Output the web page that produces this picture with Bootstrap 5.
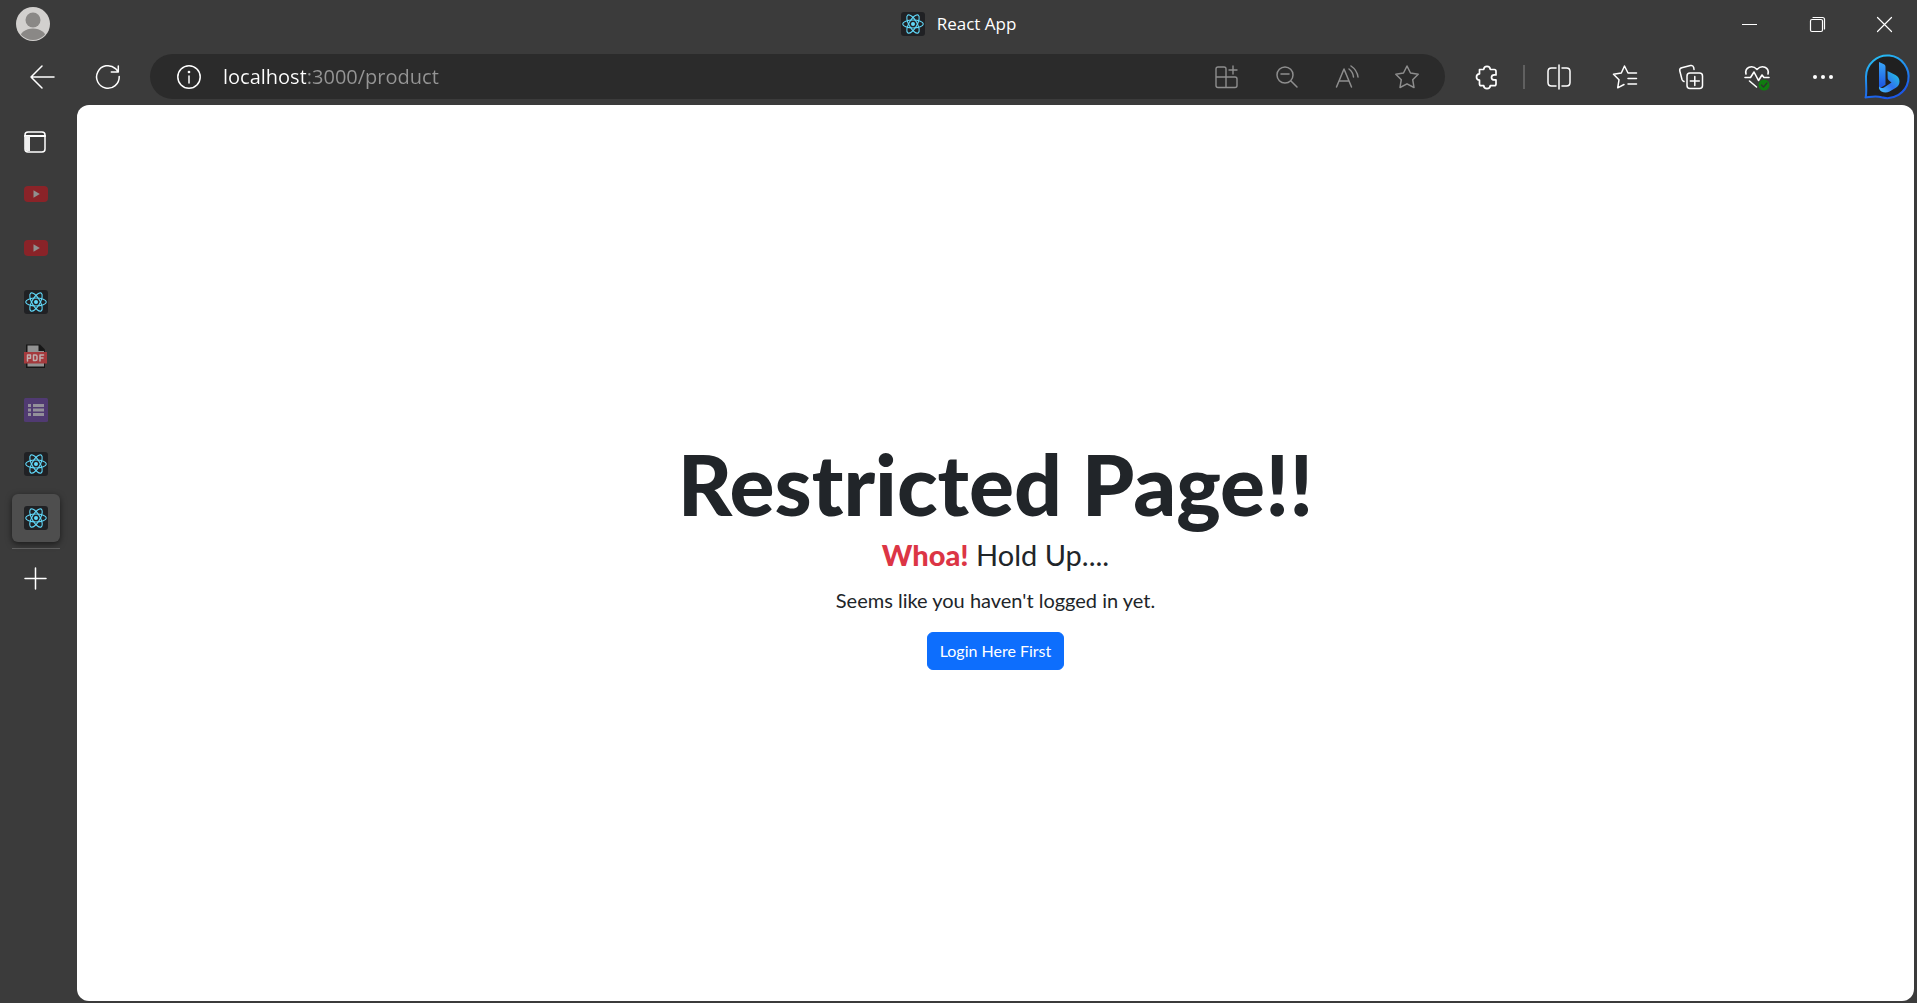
<!DOCTYPE html>
<html lang="en">
<head>
<meta charset="utf-8">
<meta name="viewport" content="width=device-width, initial-scale=1">
<title>React App</title>
<link href="https://cdn.jsdelivr.net/npm/bootstrap@5.3.0/dist/css/bootstrap.min.css" rel="stylesheet">
<style>
body{background:#3b3b3b;color:#fff;font-family:"Open Sans","Noto Sans",sans-serif}
button.tool{width:66px;height:46px;flex:none;border:0;padding:0;background:none;color:#fff;display:flex;align-items:center;justify-content:center}
svg{display:block;fill:none;stroke:currentColor;stroke-width:1.5;stroke-linecap:round;stroke-linejoin:round;overflow:visible}
.titlebar{height:48px}
.titlebar .side{flex:1 0 0}
.titlebar button.tool{width:68px}
.titlebar button.avatar,.titlebar button.close-window{width:66px}
.tabname{font-size:17px;line-height:26px}
.tabtitle{gap:12px}
.toolbar{height:57px;padding:0 0 0 9px}
.toolbar .address{height:45px;background:#2b2b2b;border-radius:23px;margin:0 9px;padding:0 8px 0 6px}
.address button.tool{width:60px;color:#8e8e8e}
.address button.site-info{width:66px;color:#fff}
.address input{border:0;outline:0;padding:0 0 0 1px;font-size:20px;line-height:28px;height:44px;background:linear-gradient(to right,#fff 84px,#959595 84px);-webkit-background-clip:text;background-clip:text;-webkit-text-fill-color:transparent}
.rule-v{width:2px;height:24px;background:#606060;margin:0 1px 0 3px}
.toolbar button.assistant{width:61px}
.sidetabs{width:77px;padding:13px 0 0 12px}
.sidetabs button.tool{width:48px;height:48px;border-radius:6px}
.sidetabs button.edge-tool{width:46px}
.sidetabs button.picked{background:#4e4e4e;box-shadow:0 2px 6px rgba(0,0,0,.55)}
.sidetabs .tablist{gap:6px;margin-top:4px}
.rule-h{width:48px;height:1px;background:#626262;margin:6px 0 5px}
.dimmed{opacity:.5}
.viewport{background:#fff;color:#212529;border-radius:12px;margin:0 3px 2px 0;font-family:Lato,sans-serif}
.viewport h1{font-size:84px;line-height:96px;font-weight:900;margin-bottom:2px}
.whoa{font-size:29px;line-height:42px}
.whoa strong{font-weight:900}
.hint{font-size:20px;line-height:32px}
.viewport .btn{font-size:16px;line-height:24px}
</style>
<script src="https://cdn.jsdelivr.net/npm/bootstrap@5.3.0/dist/js/bootstrap.bundle.min.js"></script>
</head>
<body>
<svg width="0" height="0" class="position-absolute" aria-hidden="true">
<defs>
<symbol id="react" viewBox="0 0 24 24"><rect width="24" height="24" rx="3" fill="#202124" stroke="none"/><g fill="none" stroke="#61dafb" stroke-width="1.1"><ellipse cx="12" cy="12" rx="10.3" ry="4"/><ellipse cx="12" cy="12" rx="10.3" ry="4" transform="rotate(60 12 12)"/><ellipse cx="12" cy="12" rx="10.3" ry="4" transform="rotate(120 12 12)"/></g><circle cx="12" cy="12" r="2" fill="#61dafb" stroke="none"/></symbol>
<symbol id="video" viewBox="0 0 24 24"><rect y="4" width="24" height="16" rx="4" fill="#d90c17" stroke="none"/><path d="M9.500 8.200v7.600l6.300-3.800z" fill="#e5e5e5" stroke="none"/></symbol>
</defs>
</svg>
<div class="vh-100 d-flex flex-column overflow-hidden">
  <header class="titlebar d-flex align-items-center justify-content-between">
    <div class="side d-flex"><button class="tool avatar" aria-label="Profile"><svg width="34" height="34" viewBox="0 0 34 34" stroke="none"><clipPath id="face"><circle cx="17" cy="17" r="16"/></clipPath><circle cx="17" cy="17" r="17" fill="#d2d0ce" stroke="none"/><g clip-path="url(#face)" fill="#8a8886" stroke="none"><circle cx="17" cy="13" r="7.500"/><ellipse cx="17" cy="32" rx="13.500" ry="10.500"/></g></svg></button></div>
    <div class="tabtitle d-flex align-items-center"><svg width="24" height="24"><use href="#react"/></svg><span class="tabname">React App</span></div>
    <div class="side d-flex justify-content-end">
      <button class="tool" aria-label="Minimize"><svg width="15" height="15"><path d="M0 7.500h15" stroke-linecap="butt" stroke-width="1"/></svg></button>
      <button class="tool" aria-label="Restore"><svg width="15" height="15"><rect x=".5" y="2.500" width="12" height="12" rx="1.500" stroke-width="1.200"/><path d="M3 .5h9.500q2 0 2 2V12" stroke-width="1.200"/></svg></button>
      <button class="tool close-window" aria-label="Close"><svg width="15" height="15"><path d="M.5.5l14 14M14.500.5l-14 14" stroke-width="1.200"/></svg></button>
    </div>
  </header>
  <nav class="toolbar d-flex align-items-center">
    <button class="tool" aria-label="Back"><svg width="24" height="24"><path d="M24 12H1M12 1L1 12l11 11"/></svg></button>
    <button class="tool" aria-label="Refresh"><svg width="24" height="24"><path d="M23.200 11.500A11.300 11.300 0 1 1 19.500 3.600L22 6.500M22.300 1v6h-7"/></svg></button>
    <div class="address d-flex align-items-center flex-grow-1">
      <button class="tool site-info" aria-label="Site information"><svg width="24" height="24"><circle cx="12" cy="12" r="11.200"/><path d="M12 11v7"/><circle cx="12" cy="7" r=".6"/></svg></button>
      <input class="flex-grow-1" type="text" aria-label="Address" value="localhost:3000/product">
      <button class="tool" aria-label="Apps"><svg width="24" height="24"><path d="M11 12V4q0-2-2-2H3Q1 2 1 4v16.500q0 2 2 2h17q2 0 2-2V14q0-2-2-2H1M11 12v10.500M18 1v8M14 5h8" stroke-width="1.400"/></svg></button>
      <button class="tool" aria-label="Zoom out"><svg width="24" height="24"><circle cx="10" cy="10" r="8"/><path d="M16 16l6 6M6 9h8"/></svg></button>
      <button class="tool" aria-label="Read aloud"><svg width="24" height="24"><path d="M1.500 22L9 4l7.500 18M4 16h10M14 4q4 3 4.500 8M16 1q6 4 7 11"/></svg></button>
      <button class="tool" aria-label="Add to favorites"><svg width="24" height="24"><path d="M12 1l3.500 7 7.700 1.200-5.500 5.500 1.300 7.800-7-3.700-7 3.700 1.300-7.800L.8 9.200 8.500 8z"/></svg></button>
    </div>
    <button class="tool" aria-label="Extensions"><svg width="24" height="24"><path d="M4.500 4.500h4.200C9 .2 15 .2 15.300 4.500h4q1.700 0 1.700 1.700v3.700h-1.500c-4 0-4 5 0 5H21v4q0 1.700-1.700 1.700h-4c-.3 4-6.300 4-6.600 0H6.200q-1.700 0-1.700-1.700v-3.700c-4-.3-4-6 0-6.300z" stroke-width="1.700"/></svg></button>
    <div class="rule-v"></div>
    <button class="tool" aria-label="Split screen"><svg width="24" height="24"><path d="M9 3H4.500Q1 3 1 6.500v11Q1 21 4.500 21H9M15 3h4.500Q23 3 23 6.500v11q0 3.500-3.500 3.500H15M12 0v24"/></svg></button>
    <button class="tool" aria-label="Favorites"><svg width="24" height="24"><path d="M15 8L11.500 1 8.300 8 .5 9.300l5.500 5.500-1.300 8L11 19.500M15 8h8.500M15 13.500h8.500M15 19h8.500"/></svg></button>
    <button class="tool" aria-label="Collections"><svg width="24" height="24"><rect x="8" y="8" width="15.500" height="15.500" rx="3"/><path d="M15.800 11.500v9M11.300 16h9M5 16.500q-1.500-.5-2-2L.8 6Q.2 3.500 2.800 2.800L11.500.6q2.500-.6 3.200 1.900l.3 2"/></svg></button>
    <button class="tool" aria-label="Browser essentials"><svg width="24" height="24"><path d="M1 9C-.5 2.500 7-.8 12 4.500 17-.8 24.500 2.500 23 9M0 12.500h5.500L9 7l4.500 8.500L17 10l2 2.500h5M4.500 16l7 6" stroke-width="1.600"/><circle cx="19" cy="20" r="5.500" fill="#107c10" stroke="none"/><path d="M16.500 20l2 2 3.500-4" stroke="#303030" stroke-width="1.200"/></svg></button>
    <button class="tool" aria-label="Settings and more"><svg width="20" height="4"><g fill="#fff" stroke="none"><circle cx="2" cy="2" r="2"/><circle cx="10" cy="2" r="2"/><circle cx="18" cy="2" r="2"/></g></svg></button>
    <button class="tool assistant" aria-label="Bing Chat"><svg width="46" height="46" viewBox="0 0 46 46"><defs><linearGradient id="ring" x1="0" y1="0" x2=".4" y2="1"><stop stop-color="#28c8f5"/><stop offset="1" stop-color="#1b58e8"/></linearGradient><linearGradient id="stem" x1="0" y1="0" x2="0" y2="1"><stop stop-color="#38a6f8"/><stop offset="1" stop-color="#1a50e0"/></linearGradient><linearGradient id="bowl" x1="1" y1="0" x2="0" y2="1"><stop stop-color="#20cfe0"/><stop offset=".55" stop-color="#2f72ee"/><stop offset="1" stop-color="#48c8ff"/></linearGradient></defs><path d="M1.500 43.500c1.500-4 .5-9 .5-21a21.300 21.300 0 1 1 15.500 20.800c-6-2-11-.3-16 .2z" fill="#202020" stroke="url(#ring)" stroke-width="2"/><path d="M15 8l5 2.300q1.500.8 1.500 2.500v18l-6.500 4z" fill="url(#stem)" stroke="none"/><path d="M23.500 17l8 4q4 2 4 6.500 0 4-4 6.500l-6 3.500q-4 2-8 0-3-2-2.500-5 2 2.500 5 1l7.500-5-2.500-2q-1-1-1.300-2z" fill="url(#bowl)" stroke="none"/></svg></button>
  </nav>
  <div class="d-flex flex-grow-1">
    <aside class="sidetabs flex-shrink-0">
      <button class="tool edge-tool" aria-label="Tab actions"><svg width="22" height="22"><rect x="1" y="1" width="20" height="20" rx="3"/><path d="M1 5h20" stroke-width="2"/><path d="M1 5h5v15H3q-2 0-2-2z" fill="#eee" stroke="none"/></svg></button>
      <div class="tablist d-flex flex-column">
        <button class="tool" aria-label="Video tab 1"><svg class="dimmed" width="24" height="24"><use href="#video"/></svg></button>
        <button class="tool" aria-label="Video tab 2"><svg class="dimmed" width="24" height="24"><use href="#video"/></svg></button>
        <button class="tool" aria-label="React App tab 1"><svg width="24" height="24"><use href="#react"/></svg></button>
        <button class="tool" aria-label="PDF tab"><svg width="24" height="24"><path d="M2 .5h14l5 5V24H2z" fill="#171717" stroke="none"/><path d="M3.500 1.500h11v5.500H20v15.500H3.500z" fill="#929292" stroke="none"/><path d="M0 8h23v11.500H0z" fill="#a43a3d" stroke="none"/><path d="M3.500 17v-6h3v3.300h-3M9.500 11v5.500h2q1.500 0 1.500-1.500v-2.500q0-1.500-1.500-1.500zM16 17v-6h3.500M16 14h3" stroke="#bdb0b0" stroke-width="1.500"/></svg></button>
        <button class="tool" aria-label="Form tab"><svg width="24" height="24"><rect width="24" height="24" rx="1.500" fill="#503a72" stroke="none"/><path d="M4 7.500h3M4 12h3M4 16.500h3M9 7.500h11M9 12h11M9 16.500h11" stroke="#93909a" stroke-width="3" stroke-linecap="butt"/></svg></button>
        <button class="tool" aria-label="React App tab 2"><svg width="24" height="24"><use href="#react"/></svg></button>
        <button class="tool picked" aria-label="React App, current tab"><svg width="24" height="24"><use href="#react"/></svg></button>
      </div>
      <div class="rule-h"></div>
      <button class="tool edge-tool" aria-label="New tab"><svg width="21" height="21"><path d="M10.500 0v21M0 10.500h21"/></svg></button>
    </aside>
    <main class="viewport flex-grow-1 d-flex flex-column align-items-center justify-content-center text-center">
      <h1>Restricted Page!!</h1>
      <p class="whoa mb-2"><strong class="text-danger">Whoa!</strong> Hold Up....</p>
      <p class="hint mb-3">Seems like you haven't logged in yet.</p>
      <button class="btn btn-primary">Login Here First</button>
    </main>
  </div>
</div>
</body>
</html>
